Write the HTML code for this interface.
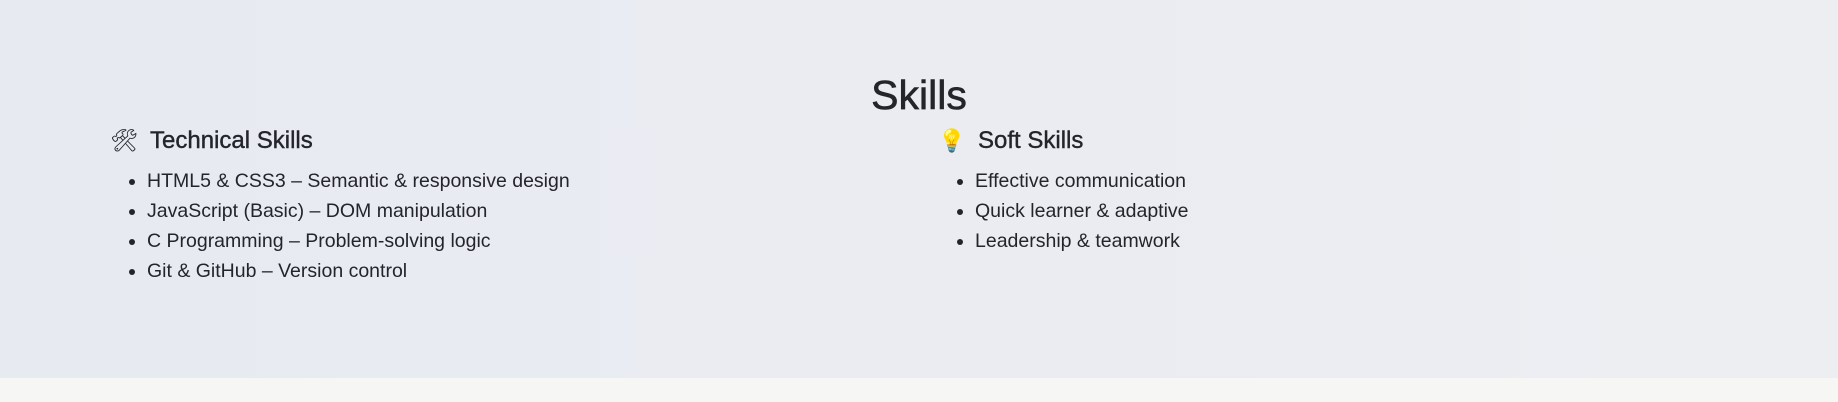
<!DOCTYPE html>
<html><head><meta charset="utf-8"><style>
html,body{margin:0;padding:0;}
body{width:1838px;height:402px;overflow:hidden;font-family:"Liberation Sans",sans-serif;color:#23252b;background:#f6f6f5;position:relative;}
.band{position:absolute;left:0;top:0;width:1838px;height:378px;background:linear-gradient(90deg,#e8eaf2,#eceef2);}
h1{position:absolute;margin:0;top:72px;left:0;width:1838px;text-align:center;font-size:41px;font-weight:normal;-webkit-text-stroke:0.6px #23252b;}
.col{position:absolute;top:126px;}
.col h2{margin:0;font-size:24px;font-weight:normal;-webkit-text-stroke:0.4px #23252b;height:30px;line-height:30px;white-space:nowrap;}
.ic{display:inline-block;width:40px;font-size:22px;-webkit-text-stroke:0;}
ul{margin:10px 0 0 0;padding:0 0 0 37px;font-size:19.5px;}
li{height:30px;line-height:30px;white-space:nowrap;}
</style></head><body>
<div class="band"></div>
<h1>Skills</h1>
<div class="col" style="left:110px"><h2><span class="ic">🛠</span>Technical Skills</h2>
<ul><li>HTML5 &amp; CSS3 – Semantic &amp; responsive design</li><li>JavaScript (Basic) – DOM manipulation</li><li>C Programming – Problem-solving logic</li><li>Git &amp; GitHub – Version control</li></ul></div>
<div class="col" style="left:938px"><h2><span class="ic">💡</span>Soft Skills</h2>
<ul><li>Effective communication</li><li>Quick learner &amp; adaptive</li><li>Leadership &amp; teamwork</li></ul></div>
</body></html>
